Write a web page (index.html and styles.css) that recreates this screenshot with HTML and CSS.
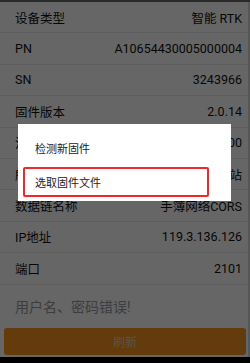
FILE: index.html
```html
<!DOCTYPE html>
<html lang="zh-CN">
<head>
<meta charset="utf-8">
<link rel="stylesheet" href="styles.css">
</head>
<body>
<div class="screen">
  <div class="topbar"></div>
  <div class="page">
    <div class="list">
      <div class="row"><span class="label">设备类型</span><span class="value">智能 RTK</span></div>
      <div class="row"><span class="label">PN</span><span class="value">A10654430005000004</span></div>
      <div class="row"><span class="label">SN</span><span class="value">3243966</span></div>
      <div class="row"><span class="label">固件版本</span><span class="value">2.0.14</span></div>
      <div class="row"><span class="label">注册码</span><span class="value">20201200</span></div>
      <div class="row"><span class="label">所属基站</span><span class="value">CORS基站</span></div>
      <div class="row"><span class="label">数据链名称</span><span class="value">手簿网络CORS</span></div>
      <div class="row"><span class="label">IP地址</span><span class="value">119.3.136.126</span></div>
      <div class="row"><span class="label">端口</span><span class="value">2101</span></div>
    </div>
    <div class="message">用户名、密码错误!</div>
    <div class="btn-wrap"><div class="btn">刷新</div></div>
  </div>
  <div class="navbar"></div>
  <div class="dim"></div>
  <div class="dialog">
    <div class="item">检测新固件</div>
    <div class="item item-selected">选取固件文件</div>
  </div>
</div>
</body>
</html>
```

FILE: styles.css
```css
* { box-sizing: border-box; margin: 0; padding: 0; }
html, body { width: 250px; height: 363px; overflow: hidden; }
body {
  font-family: Roboto, "Noto Sans CJK SC", sans-serif;
  background: #000;
}
.screen {
  position: relative;
  width: 250px;
  height: 363px;
  display: flex;
  flex-direction: column;
}
.topbar { height: 2px; background: #6a6a6a; flex: none; }
.page {
  flex: 1;
  background: #fff;
  border-right: 2px solid #d8d8d8;
  display: flex;
  flex-direction: column;
}
.list { display: flex; flex-direction: column; }
.row {
  height: 31.4px;
  display: flex;
  align-items: center;
  justify-content: space-between;
  padding: 0 6px 0 15px;
  border-bottom: 1px solid #ececec;
  font-size: 12.5px;
  color: #111;
}
.message {
  height: 43px;
  display: flex;
  align-items: center;
  padding-left: 15px;
  font-size: 14px;
  color: #999;
}
.btn-wrap { padding: 0 2px 0 4px; }
.btn {
  height: 27px;
  background: #f7931e;
  border-radius: 3px;
  color: #e6cfb0;
  font-size: 12px;
  display: flex;
  align-items: center;
  justify-content: center;
}
.navbar { height: 6px; background: #000; flex: none; }
.dim {
  position: absolute;
  inset: 0 0 6px 0;
  background: rgba(0, 0, 0, 0.6);
}
.dialog {
  position: absolute;
  left: 18px;
  top: 124px;
  width: 213px;
  height: 77px;
  background: #fff;
  padding: 8px 0 4px;
  display: flex;
  flex-direction: column;
  gap: 3px;
  font-family: "Noto Sans CJK SC", sans-serif;
  font-size: 11px;
  color: #222;
}
.item {
  height: 32px;
  display: flex;
  align-items: center;
  padding-left: 17px;
}
.item-selected {
  height: 30px;
  margin-left: 5px;
  width: 186px;
  border: 2px solid #f5262a;
  border-radius: 2px;
  padding-left: 10px;
}
```
